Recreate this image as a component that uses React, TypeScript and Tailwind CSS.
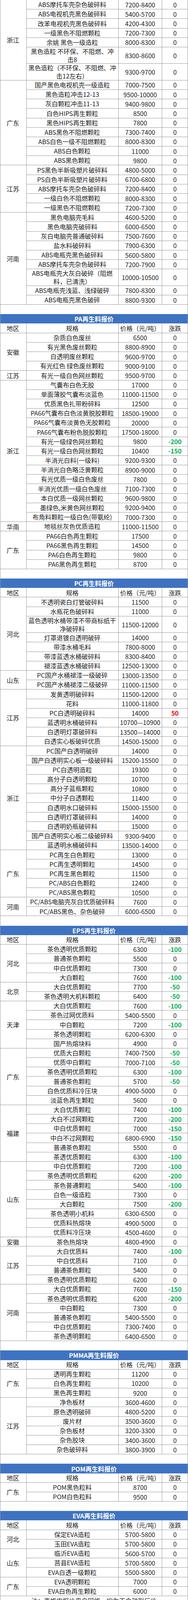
import React from 'react';

type R = [string | string[], string, string?];
type G = [string, R[]];
type S = { title?: string; groups: G[] };

const data: S[] = [
  {
    groups: [
      ['浙江', [
        ['ABS摩托车壳杂色破碎料', '7200-8400'],
        ['ABS电视机壳黑色破碎料', '5400-5700'],
        ['改苯电视机壳黑色破碎料', '4200-4300'],
        ['一级黑色不阻燃颗粒', '7200-7300'],
        ['余姚 黑色一级造粒', '8000-8300'],
        [['黑色造粒 不环保、不阻燃、冲', '击8'], '8300-8600'],
        [['黑色造粒（不环保、不阻燃、冲', '击12左右）'], '9300-9700'],
      ]],
      ['广东', [
        ['国产黑色电视机壳一级造粒', '7000-7500'],
        ['黑色造粒冲击12-13', '9500-10000'],
        ['灰白颗粒冲击11-13', '9400-9800'],
        ['白色HIPS再生颗粒', '8500'],
        ['黑色HIPS再生颗粒', '7800'],
        ['ABS黑色不阻燃颗粒', '7300-7400'],
        ['ABS白色一级不阻燃颗粒', '8000-8300'],
        ['ABS白色颗粒', '11000'],
        ['ABS黑色颗粒', '9800'],
      ]],
      ['江苏', [
        ['PS黑色半新吸塑片破碎料', '4800-5000'],
        ['PS白色半新吸塑片破碎料', '6700-6800'],
        ['ABS摩托车壳杂色破碎料', '7200-8400'],
        ['一级白色不阻燃颗粒', '8000-8300'],
        ['一级黑色不阻燃颗粒', '7200-7300'],
      ]],
      ['河南', [
        ['黑色电脑壳毛料', '4600-5200'],
        ['黑色电脑壳破碎料', '6000-6500'],
        ['灰白电脑壳普通破碎料', '7500-7600'],
        ['盐水料破碎料', '7900-6300'],
        ['ABS电瓶壳黑色破碎料', '5600-5800'],
        ['ABS摩托车壳杂色破碎料', '7200-7900'],
        [['ABS电瓶壳大灰白破碎（阻燃', '料，已清洗）'], '10000-10500'],
        ['ABS电瓶壳浅蓝、浅绿破碎', '7800-8300'],
        ['ABS电瓶壳黑色破碎', '8800-9300'],
      ]],
    ],
  },
  {
    title: 'PA再生料报价',
    groups: [
      ['安徽', [
        ['杂质白色废丝', '6500'],
        ['有光黑色废丝颗粒', '8800-8900'],
        ['白透明废丝颗粒', '9600-9700'],
        ['有光红色 绿色废丝颗粒', '9000-9100'],
      ]],
      ['江苏', [['有光一级白色网丝颗粒', '9500-9700']]],
      ['浙江', [
        ['气囊布白色无胶', '17000'],
        ['单面薄胶气囊布淡蓝色', '11000-11500'],
        ['优质黑色扎带粉碎料', '12500'],
        ['PA66气囊布白色淡黄脱胶颗粒', '18500-19000'],
        ['PA66气囊布淡黄色无胶颗粒', '20000'],
        ['PA66气囊布粉色脱胶颗粒', '17500-18000'],
        ['有光一级绿色网丝颗粒', '9800', '-200'],
        ['有光一级白色网丝颗粒', '10400', '-150'],
        ['半消光白料(一级料)', '9200-9300'],
        ['半消光白色略泛黄颗粒', '8900-9000'],
        ['有光优质一级白色废丝', '7800'],
        ['半消光优质一级白色废丝', '7100-7300'],
        ['本白优质一级网丝颗粒', '9600-9800'],
        ['墨绿色,米黄色网丝颗粒', '9200-9400'],
        ['布角料颗粒一级白色(带氨纶)', '7000-7300'],
      ]],
      ['华南', [['地毯丝灰色优质造粒', '11000-11500']]],
      ['广东', [
        ['PA66白色再生颗粒', '17500'],
        ['PA66黑色再生颗粒', '14500'],
        ['PA6白色再生颗粒', '9800'],
        ['PA6黑色再生颗粒', '8700'],
      ]],
    ],
  },
  {
    title: 'PC再生料报价',
    groups: [
      ['河北', [
        ['不透明瓷白灯管破碎料', '11500'],
        ['水瓶花色破碎料', '11000'],
        [['蓝色透明水桶带漆不带商标纸干', '净破碎料'], '11500-12000'],
        ['灯罩退镀白透明破碎', '14000'],
        ['带漆水桶毛料', '7800-8000'],
        ['带漆蓝透水桶破碎料', '8300-8400'],
        ['褪漆蓝透水桶破碎料', '12500-13000'],
      ]],
      ['山东', [
        ['PC国产水桶褪漆一级破碎', '13000-13500'],
        ['PC国产水桶褪漆二级破碎', '11000-11500'],
      ]],
      ['江苏', [
        ['发黄透明破碎料', '11500-12000'],
        ['花料', '11000-11800'],
        ['PC白透明破碎料', '14000', '50'],
        ['蓝透明水桶破碎料', '10700—10900'],
        ['白透明灯罩破碎料', '13500—14000'],
        ['白透实心板破碎优质', '14500-15000'],
      ]],
      ['浙江', [
        ['PC国产白透明破碎', '14000'],
        ['国产白透明实心板一级破碎料', '15200-15500'],
        ['PC白透明造粒', '19300'],
        ['高分子白透明颗粒', '10700'],
        ['高分子蓝瓶颗粒', '10800'],
        ['中分子白透颗粒', '11400'],
        ['白透明水口破碎料', '15000-15500'],
        ['白透明灯罩破碎料', '14000'],
        ['白透明奶瓶破碎料', '15000'],
        ['国产白透明实心板二级破碎料', '9300-9400'],
        ['蓝透明水桶破碎料', '13500-14000'],
      ]],
      ['广东', [
        ['PC再生白色颗粒', '13000'],
        ['PC再生透明颗粒', '14500'],
        ['PC再生黑色颗粒', '11500'],
        ['PC/ABS白色颗粒', '12400'],
        ['PC/ABS黑色颗粒', '10500'],
      ]],
      ['河南', [
        ['PC/ABS电脑壳灰白优质破碎料', '7600'],
        ['PC/ABS黑色、杂色破碎', '6000-6500'],
      ]],
    ],
  },
  {
    title: 'EPS再生料报价',
    groups: [
      ['河北', [
        ['茶色透明优质颗粒', '6300', '-100'],
        ['普通茶色颗粒', '5500'],
        ['中白优质颗粒', '7300'],
        ['大白颗粒', '7600', '-100'],
      ]],
      ['北京', [
        ['大白优质颗粒', '7700', '-50'],
        ['茶色透明大机料颗粒', '6400', '-50'],
      ]],
      ['天津', [
        ['大白优质颗粒', '7600', '-100'],
        ['茶色过网优质料', '5400-5500'],
        ['中白颗粒', '7200', '-100'],
        ['茶色透明颗粒', '6200-6300'],
        ['国产热熔块料', '4900'],
      ]],
      ['广东', [
        ['优质大白颗粒', '7400-7500', '-50'],
        ['优质中白颗粒', '7000-7100', '-50'],
        ['茶色透明优质颗粒', '6300', '-100'],
        ['普通茶色颗粒', '5700', '-50'],
        ['白色优质料冷压块', '4900-5000'],
        ['淡蓝色再生颗粒', '5600'],
      ]],
      ['福建', [
        ['大白优质颗粒', '7400', '-100'],
        ['大白不过网颗粒', '7200', '-200'],
        ['中白优质颗粒', '7000', '-150'],
        ['中白不过网颗粒', '6800-6900', '-150'],
        ['普通茶色颗粒', '5500'],
        ['茶透优质颗粒', '6300', '-100'],
      ]],
      ['山东', [
        ['中白优质颗粒', '7200', '-100'],
        ['茶色透明优质颗粒', '6200', '-200'],
        ['茶色普通颗粒', '5400', '-100'],
        ['白色一级造粒', '7300'],
        ['大白颗粒', '7500', '-200'],
        ['茶色透明小机料', '6300-6500'],
        ['优质料热熔块', '4900-5000'],
        ['优质料冷压块', '4500-4600'],
      ]],
      ['安徽', [['茶色热熔块', '4800-4900']]],
      ['江苏', [
        ['大白优质料', '7400', '-100'],
        ['中白优质料', '7100'],
        ['普通茶色颗粒', '5400'],
        ['茶色透明优质颗粒', '6200'],
      ]],
      ['河南', [
        ['大白优质颗粒', '7600', '-150'],
        ['茶色透明优质颗粒', '6200', '-200'],
        ['中白颗粒', '7300'],
        ['普通茶色颗粒', '5400-5500'],
        ['中白优质颗粒', '7300-7400'],
        ['茶色透明颗粒', '6400-6500'],
      ]],
    ],
  },
  {
    title: 'PMMA再生料报价',
    groups: [
      ['广东', [
        ['透明再生颗粒', '11200'],
        ['白色再生颗粒', '10200'],
        ['黑色再生颗粒', '9200'],
      ]],
      ['江苏', [
        ['净色板材', '3600-4600'],
        ['原色透明破碎', '4800-5200'],
        ['废片材', '3500-3600'],
        ['杂色板材', '3200-3300'],
        ['杂色胶块', '3400-3600'],
        ['杂色破碎料', '3800-3900'],
      ]],
    ],
  },
  {
    title: 'POM再生料报价',
    groups: [
      ['广东', [
        ['POM黑色粒料', '8700'],
        ['POM白色粒料', '9500'],
      ]],
    ],
  },
  {
    title: 'EVA再生料报价',
    groups: [
      ['河北', [
        ['保定EVA造粒', '5700-5800'],
        ['玉田EVA造粒', '5700-5800'],
      ]],
      ['山东', [
        ['临沂EVA造粒', '5600-5700'],
        ['莒县EVA造粒', '5700-5800'],
        ['EVA白透一级颗粒', '5500-5800'],
      ]],
      ['广东', [
        ['EVA透明颗粒', '7000'],
        ['EVA白色再生颗粒', '6000'],
      ]],
    ],
  },
];

function Change({ c }: { c: string }) {
  if (c === '0') return <span>0</span>;
  if (c.startsWith('-')) return <span className="font-bold text-[#00b050]">{c}</span>;
  return <span className="font-bold text-[#ff0000]">{c}</span>;
}

function DataRow({ r }: { r: R }) {
  const [s, p, c = '0'] = r;
  const two = Array.isArray(s);
  return (
    <div className={`flex border-b border-[#9a9a9a] ${two ? 'h-[42.5px]' : 'h-[24.18px]'}`}>
      <div className="w-[235px] shrink-0 border-r border-[#9a9a9a] flex flex-col items-center justify-center leading-[20.7px] whitespace-nowrap">
        {two ? (s as string[]).map((l, i) => <span key={i}>{l}</span>) : <span>{s as string}</span>}
      </div>
      <div className="w-[111.7px] shrink-0 border-r border-[#9a9a9a] flex items-center justify-center whitespace-nowrap">
        {p}
      </div>
      <div className="flex-1 flex items-center justify-center">
        <Change c={c} />
      </div>
    </div>
  );
}

function Group({ g }: { g: G }) {
  const [region, rows] = g;
  return (
    <div className="flex">
      <div className="w-[66.5px] shrink-0 border-r border-b border-[#9a9a9a] flex items-center pl-[16px]">
        {region}
      </div>
      <div className="flex-1 flex flex-col">
        {rows.map((r, i) => (
          <DataRow key={i} r={r} />
        ))}
      </div>
    </div>
  );
}

function HeaderRow() {
  return (
    <div className="flex h-[24.18px] border-b border-[#9a9a9a]">
      <div className="w-[66.5px] shrink-0 border-r border-[#9a9a9a] flex items-center pl-[16px]">地区</div>
      <div className="w-[235px] shrink-0 border-r border-[#9a9a9a] flex items-center justify-center">规格</div>
      <div className="w-[111.7px] shrink-0 border-r border-[#9a9a9a] flex items-center justify-center whitespace-nowrap">价格（元/吨）</div>
      <div className="flex-1 flex items-center justify-center">涨跌</div>
    </div>
  );
}

export default function App() {
  return (
    <div className="w-[480px] bg-white border-l border-r border-[#9a9a9a] text-[16px] leading-none text-[#1c1c1c] font-['Noto_Sans_CJK_SC','Noto_Sans',sans-serif]">
      {data.map((sec, si) => (
        <div key={si}>
          {si > 0 && <div className="h-[24.18px]" />}
          {sec.title && (
            <div className="h-[24.18px] bg-[#3f73c1] text-white font-bold flex items-center justify-center">
              {sec.title}
            </div>
          )}
          {sec.title && <HeaderRow />}
          {sec.groups.map((g, gi) => (
            <Group key={gi} g={g} />
          ))}
        </div>
      ))}
      <div className="h-[24.18px] border-b border-[#9a9a9a] flex items-center justify-center text-[#333]">
        注：表格中报价来自网络，均为不含税到厂价
      </div>
    </div>
  );
}
